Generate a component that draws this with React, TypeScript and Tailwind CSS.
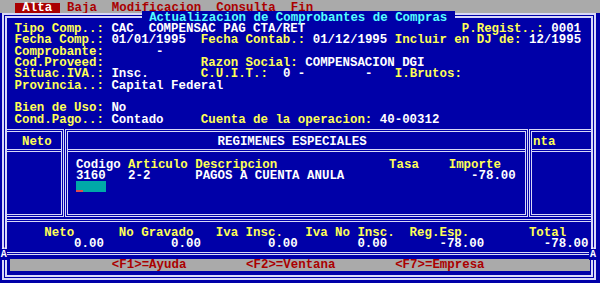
import type { ReactNode } from "react";

// one text cell = 7.46px wide, one text row = 11.32px high (80x25 screen)
type Item = [number, string, string?];

const Y = "text-[#ffff55]";
const W = "text-white";
const R = "text-[#aa0000]";

function Line({ from, items, className = "" }: { from: number; items: Item[]; className?: string }) {
  let cursor = from;
  const parts: ReactNode[] = [];
  items.forEach(([col, text, color = W], i) => {
    if (col > cursor) parts.push(" ".repeat(col - cursor));
    parts.push(
      <span key={i} className={color}>
        {text}
      </span>
    );
    cursor = col + text.length;
  });
  return <div className={`h-[11.32px] pt-[1.5px] whitespace-pre ${className}`}>{parts}</div>;
}

const fields: Item[][] = [
  [[2, "Tipo Comp..:", Y], [15, "CAC"], [20, "COMPENSAC PAG CTA/RET"], [62, "P.Regist..:", Y], [74, "0001"]],
  [[2, "Fecha Comp.:", Y], [15, "01/01/1995"], [27, "Fecha Contab.:", Y], [42, "01/12/1995"], [53, "Incluir en DJ de:", Y], [71, "12/1995"]],
  [[2, "Comprobante:", Y], [21, "-"]],
  [[2, "Cod.Proveed:", Y], [27, "Razon Social:", Y], [41, "COMPENSACION DGI"]],
  [[2, "Situac.IVA.:", Y], [15, "Insc."], [27, "C.U.I.T.:", Y], [38, "0"], [40, "-"], [49, "-"], [53, "I.Brutos:", Y]],
  [[2, "Provincia..:", Y], [15, "Capital Federal"]],
  [],
  [[2, "Bien de Uso:", Y], [15, "No"]],
  [[2, "Cond.Pago..:", Y], [15, "Contado"], [27, "Cuenta de la operacion:", Y], [51, "40-00312"]],
];

const totalsLabels: Item[] = [
  [6, "Neto", Y], [16, "No Gravado", Y], [29, "Iva Insc.", Y], [41, "Iva No Insc.", Y], [55, "Reg.Esp.", Y], [71, "Total", Y],
];
const totalsValues: Item[] = [
  [10, "0.00"], [23, "0.00"], [36, "0.00"], [48, "0.00"], [59, "-78.00"], [73, "-78.00"],
];

export default function App() {
  return (
    <div className="w-[600px] h-[283px] bg-[#0000a8] flex flex-col overflow-hidden font-['Liberation_Mono','DejaVu_Sans_Mono',monospace] font-bold text-[12.43px] leading-[11.32px] text-white">
      {/* Menu bar */}
      <div className="h-[13px] shrink-0 bg-[#aaaaaa] pt-[3px]">
        <div className="flex h-[10px] leading-[10px] text-[#aa0000] whitespace-pre">
          <span className="w-[14.92px]" />
          <span className="bg-[#aa0000] text-white">{" Alta "}</span>
          <span>{" Baja  Modificacion  Consulta  Fin"}</span>
        </div>
      </div>

      {/* Main window */}
      <div className="relative ml-[2px] h-[267px] w-[594px] shrink-0 border-[5px] border-double border-[#d8d8f8] flex flex-col">
        <div className="absolute left-[134.7px] -top-[6.68px] h-[11.32px] pt-[1.5px] bg-[#0000a8] text-[#55ffff] whitespace-pre">
          {" Actualizacion de Comprobantes de Compras "}
        </div>
        <div className="absolute -left-[7px] top-[231.04px] w-[7.46px] h-[11.32px] bg-[#0000a8] text-[10px] text-center">
          Â
        </div>
        <div className="absolute left-[582.3px] top-[231.04px] w-[7.46px] h-[11.32px] bg-[#0000a8] text-[10px] text-center">
          Â
        </div>

        {/* Header fields */}
        <div className="pt-[4.64px]">
          {fields.map((row, i) => (
            <Line key={i} from={1} items={row} />
          ))}
        </div>

        {/* Table with the Regimenes Especiales window over it */}
        <div className="mt-[4.48px] h-[88px] flex">
          <div className="w-[57px] flex flex-col border-t-[3px] border-r-[3px] border-b-[3px] border-double border-[#d8d8f8]">
            <div className="h-[20px] pt-[3.8px] border-b-[3px] border-double border-[#d8d8f8]">
              <Line from={1} items={[[3, "Neto", Y]]} />
            </div>
            <div className="flex-1" />
          </div>
          <div className="w-px" />
          <div className="w-[463px] flex flex-col border-[3px] border-double border-[#d8d8f8]">
            <div className="h-[20px] pt-[3.8px] pl-[7.9px] border-b-[3px] border-double border-[#d8d8f8]">
              <Line from={10} items={[[29, "REGIMENES ESPECIALES"]]} />
            </div>
            <div className="flex-1 pt-[6.5px] pl-[7.9px]">
              <Line from={10} items={[[10, "Codigo"], [17, "Articulo", Y], [26, "Descripcion", Y], [52, "Tasa", Y], [60, "Importe", Y]]} />
              <Line from={10} items={[[10, "3160"], [17, "2-2"], [26, "PAGOS A CUENTA ANULA"], [63, "-78.00"]]} />
              <div className="h-[11.32px] pl-[0.6px]">
                <div className="w-[29.5px] h-[11px] bg-[#00a8a8] flex items-end">
                  <div className="w-[7px] h-[2px] bg-[#e04c4c]" />
                </div>
              </div>
            </div>
          </div>
          <div className="w-px" />
          <div className="flex-1 flex flex-col border-t-[3px] border-l-[3px] border-b-[3px] border-double border-[#d8d8f8]">
            <div className="h-[20px] pt-[3.8px] pl-px border-b-[3px] border-double border-[#d8d8f8]">
              <Line from={0} items={[[0, "nta", Y]]} />
            </div>
            <div className="flex-1" />
          </div>
        </div>

        {/* Totals */}
        <div className="mt-[2px] pt-[4.4px] border-t-[3px] border-double border-[#d8d8f8]">
          <Line from={1} items={totalsLabels} />
          <Line from={1} items={totalsValues} />
        </div>
        <div className="h-[10.3px] pt-[3px]">
          <div className="border-t-[3px] border-double border-[#d8d8f8]" />
        </div>

        {/* Function keys */}
        <div className="ml-[3px] mr-px h-[11.3px] bg-[#aaaaaa]">
          <Line from={1} className={`-ml-[2.54px] !pt-px ${R}`} items={[[15, "<F1>=Ayuda", R], [33, "<F2>=Ventana", R], [53, "<F7>=Empresa", R]]} />
        </div>
      </div>
    </div>
  );
}
